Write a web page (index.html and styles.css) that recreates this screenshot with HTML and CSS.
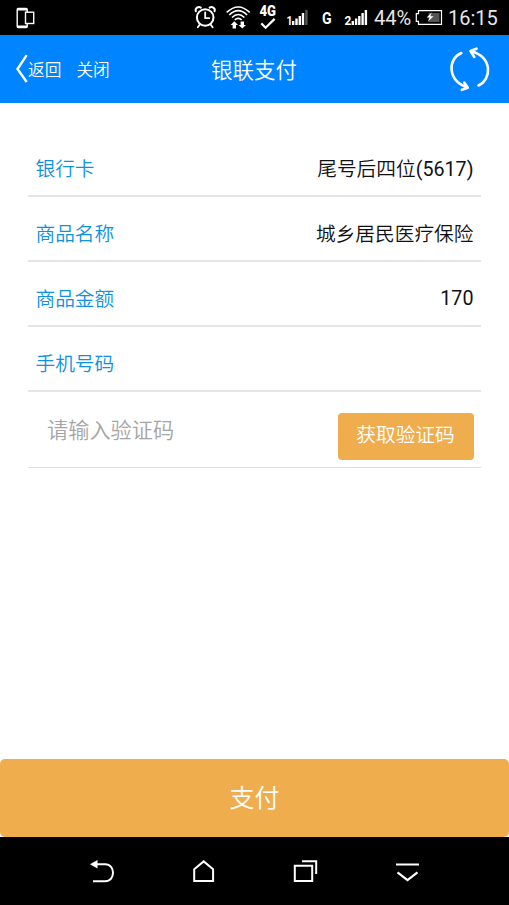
FILE: index.html
```html
<!DOCTYPE html>
<html lang="zh-CN">
<head>
<meta charset="utf-8">
<title>银联支付</title>
<link rel="stylesheet" href="styles.css">
</head>
<body>
<div class="statusbar">
  <svg class="device" width="20" height="35" viewBox="16 0 20 35" fill="none" stroke="#fff"><rect x="17.2" y="8.5" width="10" height="19" rx="1" stroke-width="1.4"/><path d="M17 9.2h10M17 26.6h10" stroke-width="2.4"/><rect x="25.5" y="12.2" width="8.2" height="11.3" fill="#000" stroke-width="1.4"/></svg>
  <svg class="alarm" width="24" height="35" viewBox="193 0 24 35" fill="none" stroke="#fff" stroke-linecap="round"><circle cx="205.2" cy="17.5" r="8.3" stroke-width="2"/><path d="M205.2 12.5v5.7h4M199.8 24.5l-2 2.7M210.6 24.5l2 2.7" stroke-width="1.8"/><path d="M195.8 11.2c-1-3 2.8-5.3 5-3.6M209.6 7.6c2.2-1.7 6 .6 5 3.6" stroke-width="2"/></svg>
  <svg class="wifi" width="26" height="35" viewBox="225 0 26 35" fill="none" stroke="#fff" stroke-width="1.6"><path d="M226.7 12.4q11.5-10.8 23 0M229.3 15q8.9-8.6 17.8 0M232 17.5q6.2-6 12.4 0M234.8 19.8q3.4-3 6.8 0"/><path d="M234.3 21.3l3.7 3.7h-2v3.4h-3.4V25h-2zM242.3 28.6l-3.7-3.7h2v-3.4h3.4v3.4h2z" fill="#fff" stroke="none"/></svg>
  <svg class="lte" width="20" height="35" viewBox="258 0 20 35"><text x="259.5" y="15.8" font-size="13.8" font-weight="900" textLength="16.5" lengthAdjust="spacingAndGlyphs">4G</text><path d="M261.3 23.4l4.3 4.3 9-8.8" fill="none" stroke="#fff" stroke-width="2.2"/></svg>
  <svg class="signal-one" width="22" height="35" viewBox="286 0 22 35"><text x="286.4" y="25" font-size="12" font-weight="700" textLength="6" lengthAdjust="spacingAndGlyphs">1</text><path d="M292 21h2.4v4H292zM295.3 18.5h2.4V25h-2.4zM298.6 16h2.4v9h-2.4zM301.8 13h2.4v12h-2.4z" fill="#fff"/><path d="M305.2 10h2.4v15h-2.4z" fill="#555"/></svg>
  <svg class="gprs" width="10" height="35" viewBox="322 0 10 35"><text x="321.9" y="24" font-size="16.5" font-weight="700" textLength="9.6" lengthAdjust="spacingAndGlyphs">G</text></svg>
  <svg class="signal-two" width="24" height="35" viewBox="344 0 24 35"><text x="344.6" y="25" font-size="12" font-weight="700" textLength="6.8" lengthAdjust="spacingAndGlyphs">2</text><path d="M351.6 21h2.4v4h-2.4zM354.9 18.5h2.4V25h-2.4zM358.1 16h2.4v9h-2.4zM361.4 13h2.4v12h-2.4zM364.7 10h2.4v15h-2.4z" fill="#fff"/></svg>
  <span class="percent">44%</span>
  <svg class="battery" width="28" height="35" viewBox="415 0 28 35"><path d="M418.5 10.7h23v13.6h-23v-3h-2.2v-7.6h2.2z" fill="none" stroke="#fff" stroke-width="1.2"/><path d="M428.5 13h11v9h-11z" fill="#555"/><path d="M431.7 12.5l-5 5h3L428 21.6l5.6-5.4h-3.2z" fill="#fff"/></svg>
  <span class="clock">16:15</span>
</div>
<header class="header">
  <nav class="links">
    <svg width="13" height="30" viewBox="0 0 13 30" fill="none" stroke="#fff" stroke-width="2.4"><path d="M11.7 1.2L2.5 15l9.2 13"/></svg>
    <a>返回</a><a class="close">关闭</a>
  </nav>
  <h1>银联支付</h1>
  <svg class="refresh" width="42" height="46" viewBox="449 46 42 46" fill="none" stroke="#fff" stroke-width="2.6" stroke-linecap="round" stroke-linejoin="round"><path d="M461.3 53C447.5 59 447.2 80.5 467.5 87.5M461.8 89.8l6-2.1-3.6-5.2"/><path d="M478.5 85.5C492 79 492.5 57.5 471.5 51.2M476.5 48.7l-6 2.3 3.8 6"/></svg>
</header>
<main class="form">
  <div class="row"><span class="label">银行卡</span><span>尾号后四位<span class="digits">(5617)</span></span></div>
  <div class="row"><span class="label">商品名称</span><span>城乡居民医疗保险</span></div>
  <div class="row"><span class="label">商品金额</span><span class="digits amount">170</span></div>
  <div class="row"><span class="label">手机号码</span></div>
  <div class="row verify"><span class="hint">请输入验证码</span><button class="code">获取验证码</button></div>
</main>
<button class="pay">支付</button>
<footer class="navbar">
  <svg width="26" height="26" viewBox="89 858 26 26" fill="none" stroke="#fff" stroke-width="2"><path d="M95 864.3h10.2c10.4 0 10.4 17 0 17H93"/><path d="M90 864.3l7.5-4.3v8.5z" fill="#fff" stroke="none"/></svg>
  <svg width="26" height="26" viewBox="191 858 26 26" fill="none" stroke="#fff" stroke-width="2"><path d="M194.2 869.2l9.5-7.8 9.4 7.8v11.9h-18.9z"/></svg>
  <svg width="26" height="26" viewBox="292 858 26 26" fill="none" stroke="#fff" stroke-width="2"><path d="M294.8 865.8h17.4v15.3h-17.4zM302 861.3h14.2V874"/></svg>
  <svg width="26" height="26" viewBox="394 858 26 26" fill="none" stroke="#fff" stroke-width="2.2"><path d="M396 864.5h23M397.5 872.3l10 7.8 10-7.8"/></svg>
</footer>
</body>
</html>
```
FILE: styles.css
```css
* { box-sizing: border-box; }
body {
  margin: 0;
  height: 905px;
  display: flex;
  flex-direction: column;
  background: #fff;
  color: #111;
  font-family: Roboto, "Noto Sans CJK SC", sans-serif;
  font-size: 19.7px;
  font-weight: 350;
}
svg { display: block; flex: none; }
button { border: 0; padding: 0; font: inherit; color: #fff; background: #f0ad4e; }
.statusbar {
  height: 35px;
  flex: none;
  display: flex;
  align-items: center;
  background: #000;
  color: #e6e6e6;
  font-size: 20px;
  font-weight: 400;
  line-height: 35px;
  white-space: nowrap;
}
.statusbar text { fill: #fff; font-family: Roboto, sans-serif; }
.device { margin-left: 16px; }
.alarm { margin-left: 157px; }
.wifi { margin-left: 8px; }
.lte { margin-left: 7px; }
.signal-one { margin-left: 8px; }
.gprs { margin-left: 14px; }
.signal-two { margin-left: 12px; }
.percent { width: 47px; padding: 2px 0 0 6px; }
.clock { padding: 2px 0 0 5px; }
.header {
  height: 68px;
  flex: none;
  display: grid;
  grid-template-columns: 1fr auto 1fr;
  align-items: center;
  padding: 0 18px 0 15px;
  background: #0084ff;
  color: #fff;
}
.links { display: flex; align-items: center; font-size: 16.7px; }
.close { margin-left: 15px; }
.header h1 { margin: 0; padding: 0 0 2px 2px; font-size: 21.5px; font-weight: inherit; }
.refresh { justify-self: end; }
.form { flex: 1; padding: 29px 28px 0; }
.row {
  height: 65px;
  display: flex;
  justify-content: space-between;
  align-items: center;
  padding: 8px 7.5px 0 7.5px;
  border-bottom: 2px solid #e5e5e5;
}
.label { color: #0f91e2; }
.digits { font-weight: 400; }
.amount { padding-top: 2px; }
.verify { height: 76px; padding-top: 13px; border-bottom-width: 1px; border-color: #ddd; }
.hint { margin: -16px 0 0 11.5px; font-size: 21.2px; color: #a5a5a5; }
.code { width: 136px; height: 47px; padding-bottom: 5px; border-radius: 4px; }
.pay { height: 78px; flex: none; padding-bottom: 5px; border-radius: 5px; font-size: 25px; }
.navbar {
  height: 68px;
  flex: none;
  display: flex;
  justify-content: space-between;
  align-items: center;
  padding: 0 89px;
  background: #000;
}
```
